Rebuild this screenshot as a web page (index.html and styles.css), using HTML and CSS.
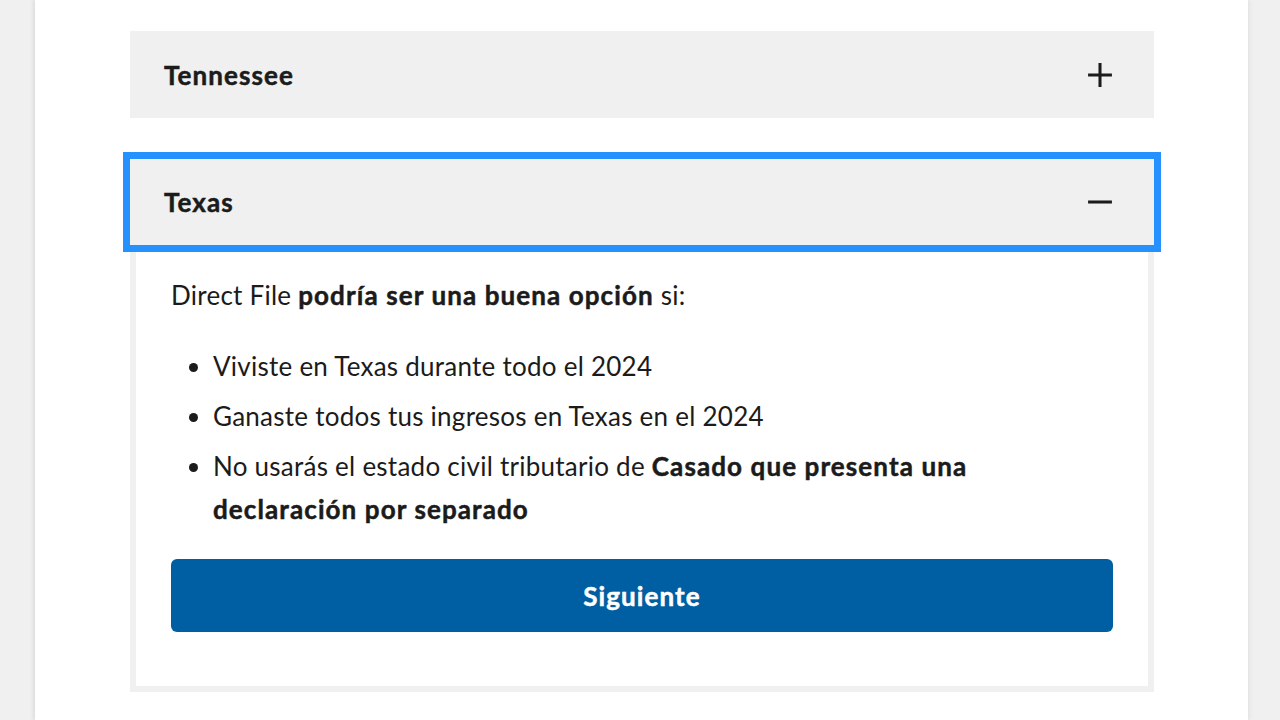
FILE: index.html
```html
<!DOCTYPE html>
<html lang="es">
<head>
<meta charset="utf-8">
<title>Direct File</title>
<link rel="stylesheet" href="styles.css">
</head>
<body>
<main class="page">
  <div class="accordion">
    <button class="acc-header" type="button">
      <span class="acc-title">Tennessee</span>
      <svg class="acc-icon" viewBox="0 0 24 24" width="26" height="26" aria-hidden="true"><path d="M12 1v22M1 12h22" stroke="#1b1b1b" stroke-width="2.8" fill="none"/></svg>
    </button>
    <button class="acc-header acc-header--focus" type="button">
      <span class="acc-title">Texas</span>
      <svg class="acc-icon" viewBox="0 0 24 24" width="26" height="26" aria-hidden="true"><path d="M1 12h22" stroke="#1b1b1b" stroke-width="2.8" fill="none"/></svg>
    </button>
    <div class="acc-content">
      <p class="lead">Direct File <strong>podría ser una buena opción</strong> si:</p>
      <ul class="list">
        <li>Viviste en Texas durante todo el 2024</li>
        <li>Ganaste todos tus ingresos en Texas en el 2024</li>
        <li>No usarás el estado civil tributario de <strong>Casado que presenta una declaración por separado</strong></li>
      </ul>
      <button class="btn" type="button">Siguiente</button>
    </div>
  </div>
</main>
</body>
</html>
```
FILE: styles.css
```css
* { box-sizing: border-box; }
html, body { margin: 0; padding: 0; }
body {
  background: #f0f0f0;
  font-family: "Lato", "Noto Sans", sans-serif;
  color: #1b1b1b;
  height: 720px;
  overflow: hidden;
}
.page {
  margin-left: 35px;
  width: 1213px;
  height: 720px;
  background: #ffffff;
  box-shadow: -2px 0 4px rgba(0,0,0,0.08), 2px 0 4px rgba(0,0,0,0.05);
  padding: 31px 94px 0 95px;
}
.accordion { display: flex; flex-direction: column; }
.acc-header {
  display: flex;
  align-items: center;
  justify-content: space-between;
  width: 100%;
  height: 87px;
  border: 0;
  margin: 0;
  padding: 0 41px 0 34px;
  background: #f0f0f0;
  font-family: inherit;
  color: #1b1b1b;
  text-align: left;
}
.acc-header--focus {
  position: relative;
  z-index: 1;
  margin-top: 41px;
  height: 86px;
  outline: 7px solid #2491ff;
}
.acc-title {
  font-size: 26px;
  font-weight: 700;
  letter-spacing: 1.1px;
  -webkit-text-stroke: 0.5px #1b1b1b;
}
.acc-icon { display: block; }
.acc-content {
  border: 6px solid #f0f0f0;
  border-top: 0;
  padding: 29px 35px 54px 35px;
  font-size: 26px;
  line-height: 43px;
  letter-spacing: 0.25px;
}
.lead { margin: 0 0 28px 0; }
.list {
  margin: 0;
  padding-left: 42px;
}
.list li { margin-top: 7px; }
.list li:first-child { margin-top: 0; }
.list strong, .lead strong {
  font-weight: 700;
  letter-spacing: 1.1px;
  -webkit-text-stroke: 0.5px #1b1b1b;
}
.btn {
  display: block;
  width: 100%;
  height: 73px;
  margin-top: 28px;
  border: 0;
  border-radius: 6px;
  background: #005ea2;
  color: #ffffff;
  font-family: inherit;
  font-size: 26px;
  font-weight: 700;
  letter-spacing: 1.1px;
  -webkit-text-stroke: 0.5px #ffffff;
}
```
